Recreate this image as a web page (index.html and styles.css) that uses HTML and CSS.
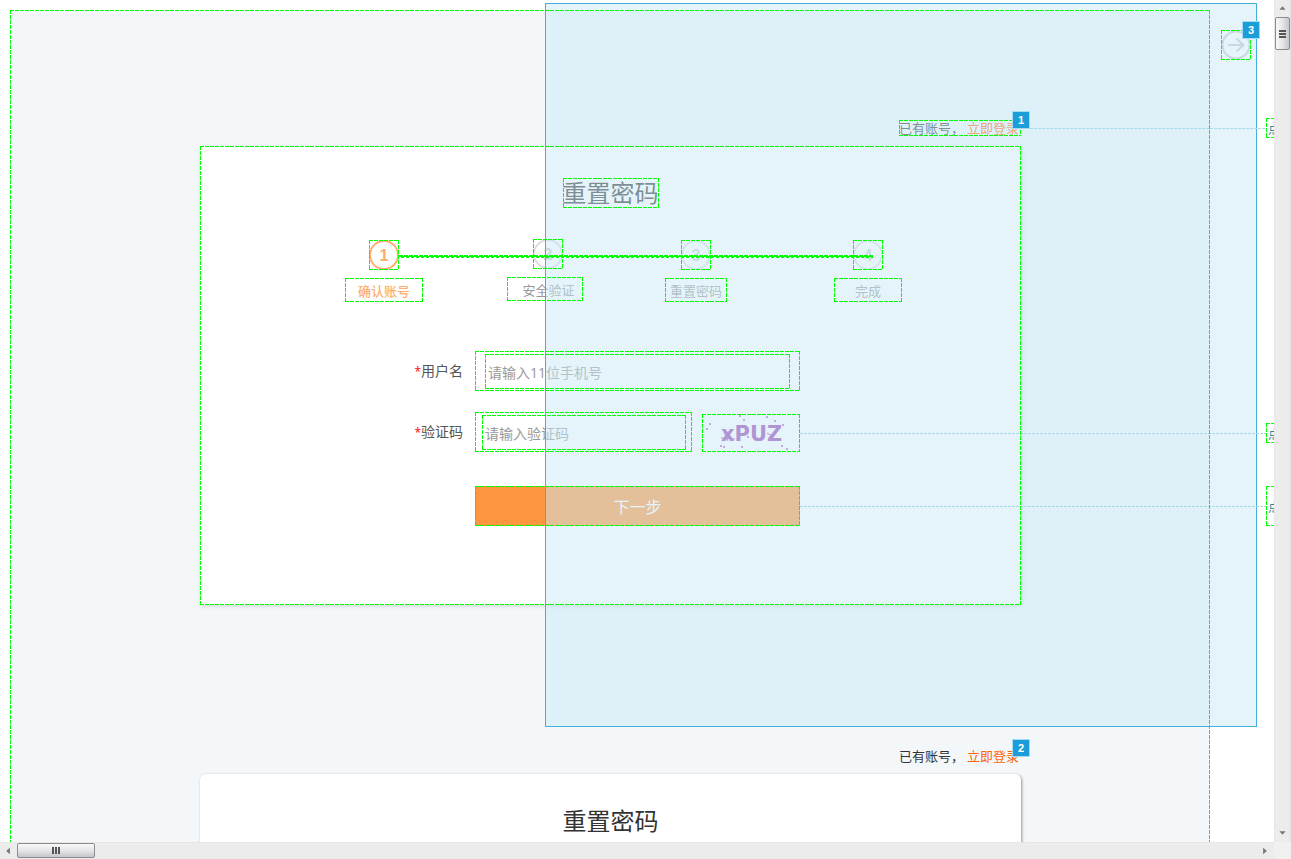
FILE: index.html
```
<!DOCTYPE html>
<html lang="zh-CN">
<head>
<meta charset="utf-8">
<title>重置密码</title>
<link rel="stylesheet" href="styles.css">
</head>
<body>
<div class="viewer">
  <main class="canvas">
    <div class="page marked">
      <section class="screen">
        <p class="account marked">已有账号， <a href="#login">立即登录</a><span class="badge">1</span></p>
        <div class="card marked">
          <h1 class="title marked">重置密码</h1>
          <ol class="steps">
            <li class="step step-account current"><span class="number marked">1</span><span class="name marked">确认账号</span></li>
            <li class="step step-verify"><span class="number marked">2</span><span class="name marked">安全验证</span></li>
            <li class="step step-reset"><span class="number marked">3</span><span class="name marked">重置密码</span></li>
            <li class="step step-done"><span class="number marked">4</span><span class="name marked">完成</span></li>
            <li class="track" aria-hidden="true"></li>
          </ol>
          <form class="form">
            <label class="label" for="user"><span class="star">*</span>用户名</label>
            <div class="field field-user marked">
              <span class="entry marked"><input class="input" id="user" type="text" placeholder="请输入11位手机号"></span>
            </div>
            <label class="label" for="code"><span class="star">*</span>验证码</label>
            <div class="code-row">
              <div class="field field-code marked">
                <span class="entry marked"><input class="input" id="code" type="text" placeholder="请输入验证码"></span>
              </div>
              <span class="captcha marked">
                <svg viewBox="0 0 98 38" role="img" aria-label="xPUZ">
                  <text class="captcha-text" x="19" y="27">xPUZ</text>
                  <path class="captcha-line" d="M19 24l14 1M22 18l4 9M65 19l7 4"/>
                  <g class="captcha-dots">
                    <circle cx="5" cy="15" r="1"/><circle cx="8" cy="10" r="1"/><circle cx="38" cy="2" r="1"/>
                    <circle cx="42" cy="6" r="1"/><circle cx="65" cy="3" r="1"/><circle cx="73" cy="7" r="1"/>
                    <circle cx="81" cy="11" r="1"/><circle cx="19" cy="32" r="1"/><circle cx="22" cy="33" r="1"/>
                    <circle cx="40" cy="33" r="1"/><circle cx="80" cy="32" r="1"/><circle cx="85" cy="35" r="1"/>
                    <circle cx="46" cy="23" r="1"/><circle cx="62" cy="16" r="1"/>
                  </g>
                </svg>
              </span>
            </div>
            <button class="next marked" type="button">下一步</button>
          </form>
        </div>
      </section>
      <section class="screen screen-second">
        <p class="account">已有账号， <a href="#login">立即登录</a><span class="badge">2</span></p>
        <div class="card card-raised">
          <h2 class="title">重置密码</h2>
        </div>
      </section>
    </div>

    <button class="go marked" type="button" aria-label="前进">
      <svg viewBox="0 0 30 30"><circle cx="15" cy="15" r="13.5"/><path d="M7 15h15M15.500 8.500l7 6.500-7 6.500"/></svg>
      <span class="badge">3</span>
    </button>

    <div class="selection"></div>
    <i class="wire wire-login"></i>
    <i class="wire wire-captcha"></i>
    <i class="wire wire-next"></i>
    <span class="note note-login marked">点</span>
    <span class="note note-captcha marked">点</span>
    <span class="note note-next marked">点</span>
  </main>

  <div class="bar bar-y">
    <button class="arrow" type="button" aria-label="向上"><svg viewBox="0 0 17 17"><path d="M5 10l3.500-4 3.500 4z"/></svg></button>
    <span class="thumb"><i></i><i></i><i></i></span>
    <button class="arrow arrow-end" type="button" aria-label="向下"><svg viewBox="0 0 17 17"><path d="M5 6l3.500 4 3.500-4z"/></svg></button>
  </div>
  <div class="bar bar-x">
    <button class="arrow" type="button" aria-label="向左"><svg viewBox="0 0 17 17"><path d="M10 5l-4 3.500 4 3.500z"/></svg></button>
    <span class="thumb"><i></i><i></i><i></i></span>
    <button class="arrow arrow-end" type="button" aria-label="向右"><svg viewBox="0 0 17 17"><path d="M6 5l4 3.500-4 3.500z"/></svg></button>
  </div>
  <div class="corner"></div>
</div>
</body>
</html>
```
FILE: styles.css
```
* { box-sizing: border-box; }

body {
  margin: 0;
  background: #fff;
  color: #333;
  font-family: "Open Sans", "Noto Sans CJK SC", sans-serif;
  font-size: 13px;
}

.viewer {
  display: grid;
  grid-template-columns: minmax(0, 1fr) 17px;
  grid-template-rows: minmax(0, 1fr) 17px;
  height: 100vh;
}

.canvas {
  position: relative;
  overflow: hidden;
}

/* dashed widget frame, kept above the selection tint */
.marked { position: relative; }

.marked::after {
  content: "";
  position: absolute;
  inset: 0;
  z-index: 2;
  pointer-events: none;
  background:
    repeating-linear-gradient(90deg, #0f0 0 4px, transparent 4px 5px) top / 100% 1px no-repeat,
    repeating-linear-gradient(90deg, #0f0 0 4px, transparent 4px 5px) bottom / 100% 1px no-repeat,
    repeating-linear-gradient(#0f0 0 4px, transparent 4px 5px) left / 1px 100% no-repeat,
    repeating-linear-gradient(#0f0 0 4px, transparent 4px 5px) right / 1px 100% no-repeat;
}

.page {
  margin: 10px 64px 0 10px;
  padding: 110px 0 0 1px;
  background: #f3f7fa;
}

.screen {
  display: flex;
  flex-direction: column;
  width: 821px;
  max-width: 100%;
  margin: 0 auto;
}

.screen-second { margin-top: 143px; }

.account {
  align-self: flex-end;
  position: relative;
  margin: 0 0 10px;
  width: 122px;
  font-family: "Noto Sans CJK SC", sans-serif;
  line-height: 16px;
  white-space: nowrap;
}

.account a {
  color: #f60;
  text-decoration: none;
}

.badge {
  position: absolute;
  top: -9px;
  right: -9px;
  z-index: 3;
  width: 18px;
  height: 18px;
  border: 1px solid #a5dcf3;
  background: #1b9dd9;
  color: #fff;
  font-family: "Liberation Sans", sans-serif;
  font-size: 11px;
  font-weight: bold;
  line-height: 16px;
  text-align: center;
}

.card {
  display: flex;
  flex-direction: column;
  align-items: center;
  padding-top: 32px;
  background: #fff;
  box-shadow: 1px 1px 4px rgba(0, 0, 0, .15);
}

.card-raised {
  min-height: 459px;
  border-radius: 6px;
  box-shadow: 1px 1px 3px rgba(0, 0, 0, .4);
}

.title {
  margin: 0;
  font-size: 24px;
  font-weight: normal;
  line-height: 30px;
}

.steps {
  position: relative;
  display: flex;
  align-self: stretch;
  margin: 32px 0 0;
  padding: 0 0 0 145px;
  list-style: none;
}

.step {
  display: flex;
  flex-direction: column;
  align-items: center;
  gap: 8px;
  color: #999;
}

.step-account { width: 78px; }
.step-verify { width: 76px; margin: -1px 0 1px 84px; }
.step-reset { width: 62px; margin-left: 82px; }
.step-done { width: 68px; margin-left: 107px; }

.number {
  width: 30px;
  height: 30px;
  border: 2px solid #ddd;
  border-radius: 50%;
  color: #ccc;
  font-family: "Liberation Sans", sans-serif;
  font-size: 16px;
  font-weight: bold;
  line-height: 28px;
  text-align: center;
}

.number::after { inset: -2px; }

.step-verify .number {
  left: 3px;
}

.name {
  align-self: stretch;
  height: 24px;
  line-height: 26px;
  text-align: center;
}

.step-verify .name { padding-left: 7px; }

.current { color: #fdae70; }
.current .name { font-weight: 500; }

.current .number {
  border-color: #fdae70;
  color: #fdae70;
}

.track {
  position: absolute;
  top: 15px;
  left: 199px;
  z-index: 2;
  width: 474px;
  height: 3px;
  background:
    repeating-linear-gradient(90deg, #0f0 0 4px, transparent 4px 5px) top / 100% 1px no-repeat,
    linear-gradient(#0f0, #0f0) center / 100% 1px no-repeat,
    repeating-linear-gradient(90deg, transparent 0 2px, #0f0 2px 5px) bottom / 100% 1px no-repeat;
}

.form {
  display: grid;
  grid-template-columns: 263px 325px;
  column-gap: 12px;
  align-self: stretch;
  margin: 49px 0 79px;
}

.label {
  font-size: 14px;
  line-height: 40px;
  text-align: right;
  color: #555;
}

.star {
  color: #f00;
  font-size: 12px;
  line-height: 1;
}

.field {
  height: 40px;
  margin-bottom: 21px;
}

.field-user { padding: 3px 10px 2px; }
.field-code { flex: 1; padding: 3px 6px 2px 7px; }

.entry {
  display: block;
  height: 35px;
}

.input {
  width: 100%;
  height: 100%;
  padding: 2px 3px 0;
  border: 0;
  outline: 0;
  background: transparent;
  color: #333;
  font: inherit;
  font-size: 14px;
}

.input::placeholder { color: #999; }

.code-row {
  display: flex;
  gap: 10px;
  margin-bottom: 13px;
}

.captcha {
  width: 98px;
  height: 38px;
  margin-top: 2px;
}

.captcha svg { display: block; }

.captcha-text {
  fill: #9740b4;
  font-family: "DejaVu Sans", sans-serif;
  font-size: 21px;
  font-weight: bold;
}

.captcha-line { fill: none; stroke: #9740b4; }
.captcha-dots { fill: #9740b4; }

.next {
  grid-column: 2;
  height: 40px;
  padding: 0;
  border: 0;
  background: #fd963e;
  color: #fff;
  font: inherit;
  font-size: 16px;
}

.go {
  position: absolute;
  top: 30px;
  right: 23px;
  width: 30px;
  height: 30px;
  padding: 0;
  border: 0;
  background: none;
}

.go svg {
  display: block;
  fill: none;
  stroke: #c9c6cc;
  stroke-width: 2;
}

.selection {
  position: absolute;
  top: 3px;
  right: 17px;
  z-index: 1;
  width: 712px;
  height: 724px;
  border: 1px solid #43b0dc;
  background: rgba(201, 234, 246, .5);
}

.wire {
  position: absolute;
  right: 8px;
  z-index: 1;
  height: 1px;
  background: repeating-linear-gradient(90deg, #add8e6 0 3px, transparent 3px 4px);
}

.wire-login { top: 128px; left: 1030px; }
.wire-captcha { top: 433px; left: 800px; }
.wire-next { top: 506px; left: 800px; }

.note {
  position: absolute;
  right: -22px;
  width: 30px;
  padding-left: 2px;
  color: #2b8a99;
  line-height: 20px;
}

.note-login { top: 118px; }
.note-captcha { top: 423px; }
.note-next { top: 486px; line-height: 40px; }

.marked.note, .marked.go { position: absolute; }

.bar {
  display: flex;
  background: #ececec;
}

.bar-y {
  flex-direction: column;
  border-right: 1px solid #e2e2e2;
  border-left: 1px solid #e6e6e6;
}

.bar-x {
  border-top: 1px solid #e6e6e6;
}

.corner { background: #f0f0f0; }

.arrow {
  flex: none;
  width: 17px;
  height: 17px;
  padding: 0;
  border: 0;
  background: none;
}

.bar-y .arrow { width: 15px; }
.bar-x .arrow { height: 16px; }

.arrow svg {
  display: block;
  width: 100%;
  height: 100%;
  fill: #777;
}

.arrow-end { margin-top: auto; }
.bar-x .arrow-end { margin: 0 0 0 auto; }

.thumb {
  display: flex;
  align-items: center;
  justify-content: center;
  gap: 1px;
  border: 1px solid #8c8c8f;
  border-radius: 2px;
}

.bar-y .thumb {
  flex-direction: column;
  height: 33px;
  background: linear-gradient(90deg, #f8f8f8, #e6e6e8 50%, #c6c6ca);
}

.bar-x .thumb {
  width: 78px;
  height: 15px;
  background: linear-gradient(#f8f8f8, #e6e6e8 50%, #c6c6ca);
}

.thumb i { background: #555; }
.bar-y .thumb i { width: 7px; height: 2px; }
.bar-x .thumb i { width: 2px; height: 7px; }
```
